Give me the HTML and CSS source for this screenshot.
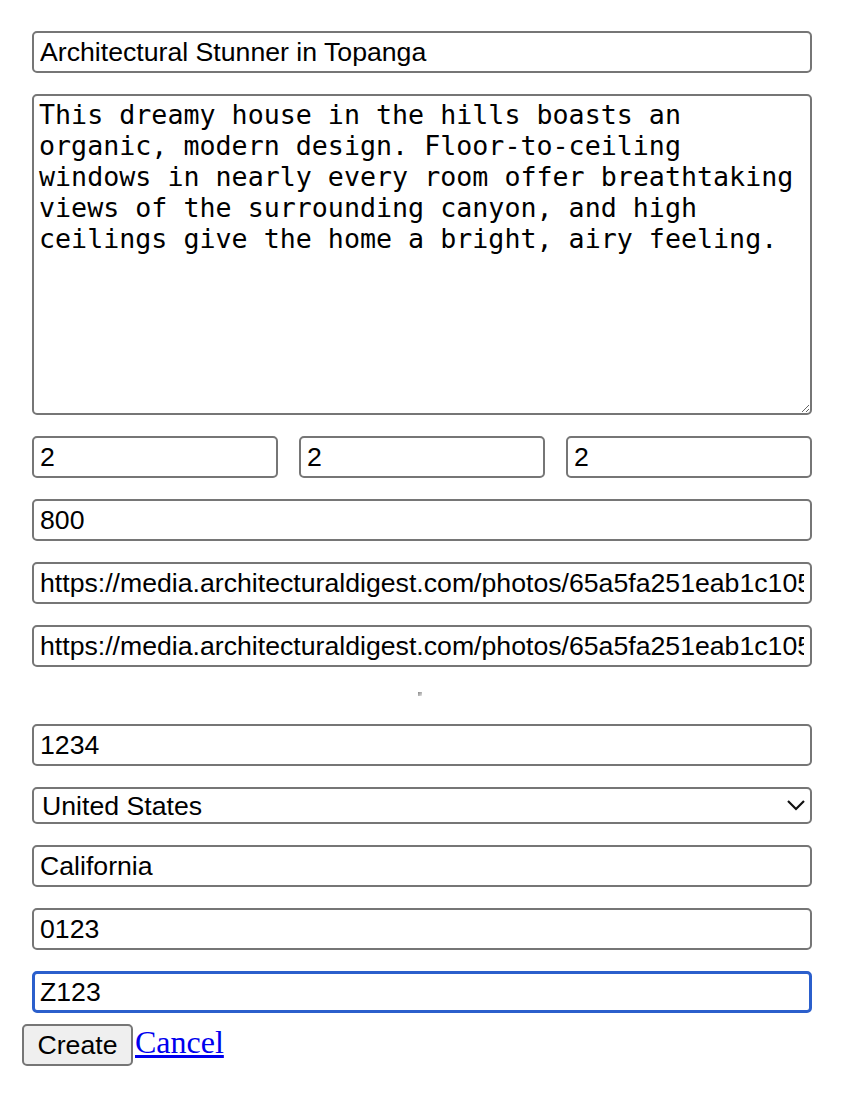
FILE: index.html
```html
<!DOCTYPE html>
<html>
<head>
<meta charset="utf-8">
<link rel="stylesheet" href="styles.css">
</head>
<body>
<form class="form">
  <input class="field" type="text" value="Architectural Stunner in Topanga">
  <textarea class="area">This dreamy house in the hills boasts an organic, modern design. Floor-to-ceiling windows in nearly every room offer breathtaking views of the surrounding canyon, and high ceilings give the home a bright, airy feeling.</textarea>
  <div class="triple">
    <input class="field" type="text" value="2">
    <input class="field" type="text" value="2">
    <input class="field" type="text" value="2">
  </div>
  <input class="field" type="text" value="800">
  <input class="field" type="text" value="https://media.architecturaldigest.com/photos/65a5fa251eab1c105f2c8b6e/master/w_1600%2Cc_limit/topanga.jpg">
  <input class="field" type="text" value="https://media.architecturaldigest.com/photos/65a5fa251eab1c105f2c8b6e/master/w_1600%2Cc_limit/topanga-2.jpg">
  <div class="preview"><span class="broken"></span></div>
  <input class="field" type="text" value="1234">
  <div class="select-wrap">
    <select class="select">
      <option>United States</option>
    </select>
    <svg class="chev" width="20" height="12" viewBox="0 0 20 12"><path d="M2 2 L10 10 L18 2" fill="none" stroke="#111" stroke-width="2.2"/></svg>
  </div>
  <input class="field" type="text" value="California">
  <input class="field" type="text" value="0123">
  <input class="field focused" type="text" value="Z123">
  <div class="actions">
    <button type="button" class="btn">Create</button><a class="link" href="#">Cancel</a>
  </div>
</form>
</body>
</html>
```

FILE: styles.css
```css
html, body {
  margin: 0;
  padding: 0;
  background: #fff;
}

.form {
  display: flex;
  flex-direction: column;
  gap: 21px;
  width: 780px;
  padding: 31px 0 0 32px;
}

.field {
  box-sizing: border-box;
  width: 100%;
  height: 42px;
  margin: 0;
  padding: 2px 6px;
  border: 2px solid #767676;
  border-radius: 5px;
  background: #fff;
  font-family: "Liberation Sans", Arial, sans-serif;
  font-size: 26.67px;
  color: #000;
  outline: none;
}

.field.focused {
  border: 3px solid #2b5fcc;
  padding: 1px 5px;
}

.area {
  box-sizing: border-box;
  width: 100%;
  height: 321px;
  margin: 0;
  padding: 3px 5px;
  border: 2px solid #767676;
  border-radius: 5px;
  font-family: "DejaVu Sans Mono", monospace;
  font-size: 26.67px;
  line-height: 31px;
  color: #000;
  outline: none;
}

.triple {
  display: flex;
  gap: 21px;
}

.triple .field {
  flex: 1;
  min-width: 0;
}

.preview {
  height: 15px;
  display: flex;
  justify-content: center;
  align-items: flex-start;
  padding-top: 4px;
  box-sizing: border-box;
}

.broken {
  display: block;
  width: 4px;
  height: 4px;
  margin-left: -4px;
  background: linear-gradient(135deg, #888 0%, #bbb 60%, #eee 100%);
}

.select-wrap {
  position: relative;
}

.select {
  box-sizing: border-box;
  width: 100%;
  height: 37px;
  margin: 0;
  padding: 0 8px;
  border: 2px solid #767676;
  border-radius: 5px;
  background: #fff;
  font-family: "Liberation Sans", Arial, sans-serif;
  font-size: 26.67px;
  color: #000;
  appearance: none;
  -webkit-appearance: none;
}

.chev {
  position: absolute;
  right: 6px;
  top: 12px;
  pointer-events: none;
}

.actions {
  display: flex;
  align-items: flex-start;
  margin: -10px 0 0 -10px;
}

.btn {
  box-sizing: border-box;
  width: 111px;
  height: 42px;
  margin: 0;
  padding: 0;
  border: 2px solid #767676;
  border-radius: 5px;
  background: #efefef;
  font-family: "Liberation Sans", Arial, sans-serif;
  font-size: 26.67px;
  color: #000;
}

.link {
  margin-left: 2px;
  font-family: "Liberation Serif", "Times New Roman", serif;
  font-size: 32px;
  line-height: 37px;
  color: #0000ee;
  text-decoration: underline;
}
```
